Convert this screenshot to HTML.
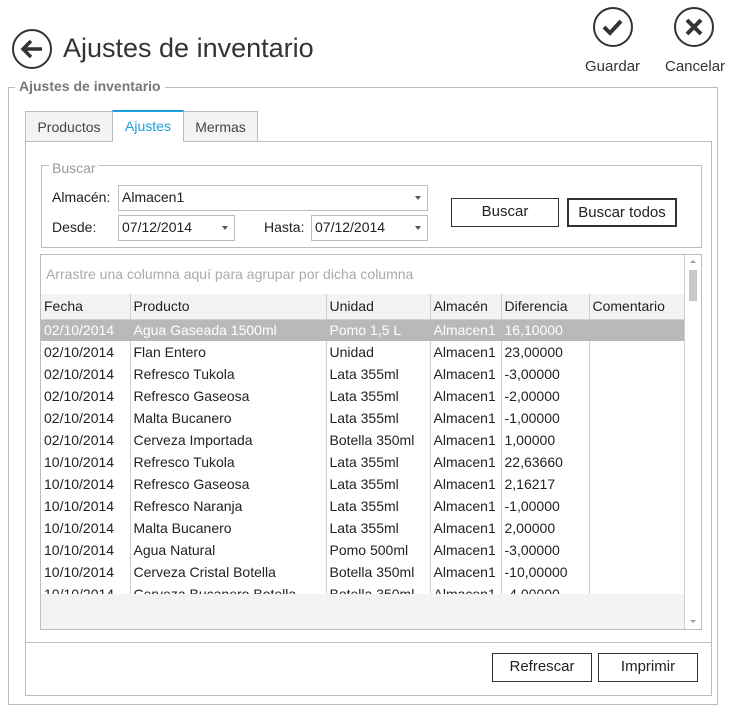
<!DOCTYPE html>
<html><head><meta charset="utf-8"><style>
*{box-sizing:border-box;margin:0;padding:0}
body{width:739px;height:712px;background:#fff;font-family:"Liberation Sans",sans-serif;color:#222;position:relative;overflow:hidden;font-size:14px}
.a{position:absolute}
.box{position:absolute;border:1px solid #bdbdbd}
.btn{position:absolute;border:1px solid #333;background:#fff;text-align:center;font-size:15px;line-height:26px}
.cb{position:absolute;border:1px solid #bdbdbd;background:#fff;font-size:14px;line-height:23px;padding-left:3px}
.cb:after{content:"";position:absolute;right:6px;top:10px;border-left:3px solid transparent;border-right:3px solid transparent;border-top:4px solid #555}
table{border-collapse:collapse;position:absolute;left:0;top:39px;width:644px;table-layout:fixed}
td{height:22px;padding-left:3px;border-right:1px solid #cfcfcf;white-space:nowrap;overflow:hidden;font-size:14px}
tr.h td{background:#f3f3f3;border-bottom:1px solid #d0d0d0;height:25px}
tr.s td{background:#b9b9b9;color:#fff;border-right-color:#b9b9b9}
</style></head><body>
<svg class="a" style="left:0;top:0" width="739" height="90">
<circle cx="32" cy="49" r="19" fill="none" stroke="#333" stroke-width="2"/>
<path d="M23 49H42M31 41l-8 8 8 8" fill="none" stroke="#333" stroke-width="3.5"/>
<circle cx="613" cy="27" r="19" fill="none" stroke="#333" stroke-width="2"/>
<path d="M604 27l6 6 11-12" fill="none" stroke="#333" stroke-width="4"/>
<circle cx="694" cy="27" r="19" fill="none" stroke="#333" stroke-width="2"/>
<path d="M687 20l14 14M701 20l-14 14" fill="none" stroke="#333" stroke-width="4"/>
</svg>
<div class="a" style="left:63px;top:33px;font-size:27px;color:#333;font-weight:300">Ajustes de inventario</div>
<div class="a" style="left:585px;top:58px;font-size:15px;color:#333">Guardar</div>
<div class="a" style="left:665px;top:58px;font-size:15px;color:#333">Cancelar</div>

<div class="box" style="left:8px;top:87px;width:710px;height:618px"></div>
<div class="a" style="left:15px;top:78px;background:#fff;padding:0 4px;font-weight:bold;color:#777;font-size:14px">Ajustes de inventario</div>

<div class="box" style="left:25px;top:111px;width:88px;height:31px;background:#f3f3f3;font-size:14px;color:#444;text-align:center;line-height:30px">Productos</div>
<div class="box" style="left:183px;top:111px;width:75px;height:31px;background:#f3f3f3;font-size:14px;color:#444;text-align:center;line-height:30px">Mermas</div>
<div class="box" style="left:25px;top:141px;width:687px;height:555px"></div>
<div class="a" style="left:112px;top:110px;width:72px;height:32px;background:#fff;border:1px solid #bdbdbd;border-top:2px solid #1ba1e2;border-bottom:none;text-align:center;line-height:28px;color:#1ba1e2;font-size:14px">Ajustes</div>

<div class="box" style="left:41px;top:165px;width:661px;height:83px"></div>
<div class="a" style="left:49px;top:160px;background:#fff;padding:0 3px;color:#999;font-size:14px">Buscar</div>
<div class="a" style="left:52px;top:189px">Almacén:</div>
<div class="cb" style="left:118px;top:185px;width:310px;height:26px">Almacen1</div>
<div class="a" style="left:52px;top:219px">Desde:</div>
<div class="cb" style="left:118px;top:215px;width:117px;height:26px">07/12/2014</div>
<div class="a" style="left:264px;top:219px">Hasta:</div>
<div class="cb" style="left:311px;top:215px;width:117px;height:26px">07/12/2014</div>
<div class="btn" style="left:451px;top:198px;width:108px;height:29px">Buscar</div>
<div class="btn" style="left:567px;top:198px;width:110px;height:29px;border:2px solid #333;line-height:25px">Buscar todos</div>

<div class="box" style="left:40px;top:254px;width:662px;height:376px;overflow:hidden">
<div class="a" style="left:5px;top:11px;color:#aaa;font-size:14px">Arrastre una columna aquí para agrupar por dicha columna</div>
<div class="a" style="left:0;top:39px;width:644px;height:340px;overflow:hidden;border-bottom:1px solid #cfcfcf;">
<table style="top:0">
<colgroup><col style="width:89px"><col style="width:196px"><col style="width:104px"><col style="width:71px"><col style="width:88px"><col style="width:96px"></colgroup>
<tr class="h"><td>Fecha</td><td>Producto</td><td>Unidad</td><td>Almacén</td><td>Diferencia</td><td>Comentario</td></tr>
<tr class="s"><td>02/10/2014</td><td>Agua Gaseada 1500ml</td><td>Pomo 1,5 L</td><td>Almacen1</td><td>16,10000</td><td></td></tr>
<tr><td>02/10/2014</td><td>Flan Entero</td><td>Unidad</td><td>Almacen1</td><td>23,00000</td><td></td></tr>
<tr><td>02/10/2014</td><td>Refresco Tukola</td><td>Lata 355ml</td><td>Almacen1</td><td>-3,00000</td><td></td></tr>
<tr><td>02/10/2014</td><td>Refresco Gaseosa</td><td>Lata 355ml</td><td>Almacen1</td><td>-2,00000</td><td></td></tr>
<tr><td>02/10/2014</td><td>Malta Bucanero</td><td>Lata 355ml</td><td>Almacen1</td><td>-1,00000</td><td></td></tr>
<tr><td>02/10/2014</td><td>Cerveza Importada</td><td>Botella 350ml</td><td>Almacen1</td><td>1,00000</td><td></td></tr>
<tr><td>10/10/2014</td><td>Refresco Tukola</td><td>Lata 355ml</td><td>Almacen1</td><td>22,63660</td><td></td></tr>
<tr><td>10/10/2014</td><td>Refresco Gaseosa</td><td>Lata 355ml</td><td>Almacen1</td><td>2,16217</td><td></td></tr>
<tr><td>10/10/2014</td><td>Refresco Naranja</td><td>Lata 355ml</td><td>Almacen1</td><td>-1,00000</td><td></td></tr>
<tr><td>10/10/2014</td><td>Malta Bucanero</td><td>Lata 355ml</td><td>Almacen1</td><td>2,00000</td><td></td></tr>
<tr><td>10/10/2014</td><td>Agua Natural</td><td>Pomo 500ml</td><td>Almacen1</td><td>-3,00000</td><td></td></tr>
<tr><td>10/10/2014</td><td>Cerveza Cristal Botella</td><td>Botella 350ml</td><td>Almacen1</td><td>-10,00000</td><td></td></tr>
<tr><td>10/10/2014</td><td>Cerveza Bucanero Botella</td><td>Botella 350ml</td><td>Almacen1</td><td>-4,00000</td><td></td></tr>
</table>
<div class="a" style="left:0;top:301px;width:644px;height:40px;background:#f3f3f3;border-top:1px solid #cfcfcf"></div>
</div>
<div class="a" style="left:0;top:339px;width:644px;height:36px;background:#f3f3f3"></div>
<div class="a" style="left:643px;top:0;width:1px;height:376px;background:#cfcfcf"></div>
<div class="a" style="left:648px;top:15px;width:8px;height:31px;background:#c8c8c8"></div>
<div class="a" style="left:649px;top:5px;border-left:3px solid transparent;border-right:3px solid transparent;border-bottom:3px solid #999"></div>
<div class="a" style="left:649px;top:365px;border-left:3px solid transparent;border-right:3px solid transparent;border-top:3px solid #999"></div>
</div>

<div class="a" style="left:25px;top:642px;width:687px;height:1px;background:#bdbdbd"></div>
<div class="btn" style="left:492px;top:653px;width:100px;height:29px">Refrescar</div>
<div class="btn" style="left:598px;top:653px;width:100px;height:29px">Imprimir</div>
</body></html>
